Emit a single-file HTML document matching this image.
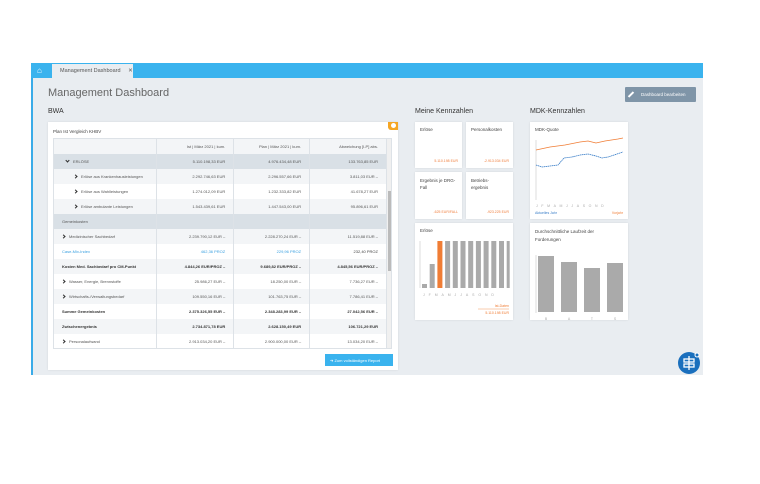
<!DOCTYPE html>
<html><head><meta charset="utf-8"><style>
*{box-sizing:border-box;margin:0;padding:0}
body{width:760px;height:484px;background:#fff;font-family:"Liberation Sans",sans-serif;position:relative;overflow:hidden;color:#444}
.a{position:absolute}
.app{left:31px;top:63px;width:672px;height:312px;background:#e9edf1;border-left:2px solid #3aabe8}
.bar{left:31px;top:63px;width:672px;height:15px;background:#3ab3ee}
.tab{left:52px;top:64px;width:81px;height:14px;background:#e9edf1;font-size:5.5px;padding:4px 0 0 8px;color:#555}
.card{background:#fff;box-shadow:0 0 2px rgba(0,0,0,.1)}
table{border-collapse:collapse;font-size:4px;color:#555}
td{height:15px;border-right:1px solid #dde2e7;text-align:right;padding-right:8px}
td:first-child{text-align:left;padding-left:8px}
tr.g td{background:#d9e0e6}
tr.l td{background:#f3f5f7}
tr.b td{font-weight:bold;color:#333}
.ch{display:inline-block;width:3px;height:3px;border-right:1px solid #333;border-bottom:1px solid #333;transform:rotate(-45deg);margin-right:4px}
.sm{font-size:4.5px;color:#444;padding:5px}
.or{color:#f08040;font-size:3.5px;position:absolute;right:4px;bottom:5px}
</style></head><body>
<div class="a app"></div>
<div class="a bar"></div>
<div class="a" style="left:37px;top:66px;width:9px;height:9px;color:#fff;font-size:8px;line-height:9px">⌂</div>
<div class="a tab">Management Dashboard <span style="margin-left:6px">✕</span></div>
<div class="a" style="left:48px;top:87px;font-size:11px;color:#666">Management Dashboard</div>
<div class="a" style="left:48px;top:108px;font-size:7px;color:#333">BWA</div>
<div class="a" style="left:415px;top:108px;font-size:7px;color:#333">Meine Kennzahlen</div>
<div class="a" style="left:530px;top:108px;font-size:7px;color:#333">MDK-Kennzahlen</div>
<div class="a" style="left:625px;top:87px;width:71px;height:15px;background:#7f95a8;color:#fff;font-size:4.5px;padding:5px 0 0 16px;border-radius:1px">Dashboard bearbeiten</div>
<div class="a" style="left:630px;top:91px;width:2px;height:7px;background:#fff;transform:rotate(45deg)"></div>

<div class="a card" style="left:48px;top:122px;width:350px;height:248px"></div>
<div class="a" style="left:388px;top:122px;width:10px;height:8px;background:#f5a623;border-radius:0 0 0 3px"></div>
<div class="a" style="left:391px;top:123px;width:5px;height:5px;background:#fff;border-radius:50%"></div>
<div class="a" style="left:53px;top:129px;font-size:4.5px;color:#444">Plan Ist Vergleich KHBV</div>
<div class="a" style="left:53px;top:138px;width:339px;height:211px;overflow:hidden;border:1px solid #dde2e7">
<table style="width:333px">
<colgroup><col style="width:103px"><col style="width:77px"><col style="width:76px"><col style="width:77px"></colgroup>
<tr class="l"><td></td><td>Ist | März 2021 | kum.</td><td>Plan | März 2021 | kum.</td><td>Abweichung [I-P] abs.</td></tr>
<tr class="g"><td style="padding-left:12px"><span class="ch" style="transform:rotate(45deg);margin-bottom:1px"></span>ERLÖSE</td><td>5.110.198,33 EUR</td><td>4.976.434,48 EUR</td><td>133.763,85 EUR</td></tr>
<tr class="l"><td style="padding-left:20px"><span class="ch"></span>Erlöse aus Krankenhausleistungen</td><td>2.292.746,63 EUR</td><td>2.296.557,66 EUR</td><td>3.811,03 EUR –</td></tr>
<tr><td style="padding-left:20px"><span class="ch"></span>Erlöse aus Wahlleistungen</td><td>1.274.012,09 EUR</td><td>1.232.333,82 EUR</td><td>41.678,27 EUR</td></tr>
<tr class="l"><td style="padding-left:20px"><span class="ch"></span>Erlöse ambulante Leistungen</td><td>1.543.439,61 EUR</td><td>1.447.543,00 EUR</td><td>95.896,61 EUR</td></tr>
<tr class="g"><td>Gemeinkosten</td><td></td><td></td><td></td></tr>
<tr class="l"><td><span class="ch"></span>Medizinischer Sachbedarf</td><td>2.239.790,12 EUR –</td><td>2.228.270,24 EUR –</td><td>11.519,88 EUR –</td></tr>
<tr><td style="color:#3aa0e0">Case-Mix-Index</td><td style="color:#3aa0e0">462,36 PROZ</td><td style="color:#3aa0e0">229,96 PROZ</td><td style="color:#444">232,40 PROZ</td></tr>
<tr class="l b"><td>Kosten Med. Sachbedarf pro CM-Punkt</td><td>4.844,26 EUR/PROZ –</td><td>9.689,82 EUR/PROZ –</td><td>4.845,56 EUR/PROZ –</td></tr>
<tr><td><span class="ch"></span>Wasser, Energie, Brennstoffe</td><td>25.986,27 EUR –</td><td>18.250,00 EUR –</td><td>7.736,27 EUR –</td></tr>
<tr class="l"><td><span class="ch"></span>Wirtschafts-/Verwaltungsbedarf</td><td>109.550,16 EUR –</td><td>101.763,75 EUR –</td><td>7.786,41 EUR –</td></tr>
<tr class="b"><td>Summe Gemeinkosten</td><td>2.375.326,55 EUR –</td><td>2.348.283,99 EUR –</td><td>27.042,56 EUR –</td></tr>
<tr class="l b"><td>Zwischenergebnis</td><td>2.734.871,78 EUR</td><td>2.628.150,49 EUR</td><td>106.721,29 EUR</td></tr>
<tr><td><span class="ch"></span>Personalaufwand</td><td>2.913.034,20 EUR –</td><td>2.900.000,00 EUR –</td><td>13.034,20 EUR –</td></tr>
</table>
<div class="a" style="left:333px;top:0;width:6px;height:211px;background:#f0f0f0"></div>
<div class="a" style="left:334px;top:52px;width:4px;height:80px;background:#bbb"></div>
</div>
<div class="a" style="left:325px;top:354px;width:68px;height:12px;background:#3ab3ee;color:#fff;font-size:4px;padding:4px 0 0 5px">➔ Zum vollständigen Report</div>

<div class="a card sm" style="left:415px;top:122px;width:47px;height:46px">Erlöse<span class="or">5.110.198 EUR</span></div>
<div class="a card sm" style="left:466px;top:122px;width:47px;height:46px">Personalkosten<span class="or">-2.913.034 EUR</span></div>
<div class="a card sm" style="left:415px;top:172px;width:47px;height:47px;line-height:7px">Ergebnis je DRG-Fall<span class="or" style="line-height:4px">-625 EUR/FALL</span></div>
<div class="a card sm" style="left:466px;top:172px;width:47px;height:47px;line-height:7px">Betriebs-<br>ergebnis<span class="or" style="line-height:4px">-923.225 EUR</span></div>
<div class="a card sm" style="left:415px;top:223px;width:98px;height:97px">Erlöse</div>
<svg class="a" style="left:415px;top:223px" width="98" height="97">
<line x1="5" y1="18" x2="5" y2="65" stroke="#ddd"/>
<rect x="7" y="61" width="5" height="4" fill="#aaa"/>
<rect x="14.7" y="41" width="5" height="24" fill="#aaa"/>
<rect x="22.4" y="18" width="5" height="47" fill="#f07d35"/>
<g fill="#aaa"><rect x="30.1" y="18" width="5" height="47"/><rect x="37.8" y="18" width="5" height="47"/><rect x="45.5" y="18" width="5" height="47"/><rect x="53.2" y="18" width="5" height="47"/><rect x="60.9" y="18" width="5" height="47"/><rect x="68.6" y="18" width="5" height="47"/><rect x="76.3" y="18" width="5" height="47"/><rect x="84" y="18" width="5" height="47"/><rect x="91.7" y="18" width="3" height="47"/></g>
<text x="8" y="73" font-size="3.5" fill="#aaa" font-family="Liberation Sans" letter-spacing="3.9">JFMAMJJASOND</text>
<text x="94" y="84" font-size="3.5" fill="#f07d35" text-anchor="end" font-family="Liberation Sans">Ist-Daten</text>
<line x1="63" y1="86" x2="94" y2="86" stroke="#f07d35" stroke-width=".4"/>
<text x="94" y="91" font-size="3.5" fill="#f07d35" text-anchor="end" font-family="Liberation Sans">5.110.198 EUR</text>
</svg>
<div class="a card sm" style="left:530px;top:122px;width:98px;height:97px">MDK-Quote</div>
<svg class="a" style="left:530px;top:122px" width="98" height="97">
<line x1="6" y1="18" x2="6" y2="78" stroke="#ddd"/>
<polyline points="6,28 20,25 35,23 50,20 58,19 66,21 75,19 88,17 93,16" fill="none" stroke="#f07d35" stroke-width="0.8"/>
<polyline points="6,43 12,45 20,44 28,43 34,36 42,35 50,33 58,32 66,34 72,36 78,35 84,33 93,30" fill="none" stroke="#3a7ec8" stroke-width="0.8" stroke-dasharray="1.5,0.5"/>
<text x="6" y="85" font-size="3.5" fill="#aaa" font-family="Liberation Sans" letter-spacing="3.6">JFMAMJJASOND</text>
<text x="5" y="92" font-size="3.5" fill="#3a7ec8" font-family="Liberation Sans">Aktuelles Jahr</text>
<text x="93" y="92" font-size="3.5" fill="#f07d35" text-anchor="end" font-family="Liberation Sans">Vorjahr</text>
</svg>
<div class="a card sm" style="left:530px;top:223px;width:98px;height:97px;line-height:8px">Durchschnittliche Laufzeit der<br>Forderungen</div>
<svg class="a" style="left:530px;top:223px" width="98" height="97">
<line x1="6" y1="32" x2="6" y2="90" stroke="#ddd"/>
<rect x="8" y="33" width="16" height="56" fill="#aaa"/>
<rect x="31" y="39" width="16" height="50" fill="#aaa"/>
<rect x="54" y="45" width="16" height="44" fill="#aaa"/>
<rect x="77" y="40" width="16" height="49" fill="#aaa"/>
<g font-size="3.5" fill="#aaa" font-family="Liberation Sans" text-anchor="middle"><text x="16" y="97">B</text><text x="39" y="97">A</text><text x="62" y="97">T</text><text x="85" y="97">S</text></g>
</svg>
<svg class="a" style="left:677px;top:351px" width="25" height="25">
<circle cx="12" cy="12" r="11" fill="#1a6fbd"/>
<circle cx="20" cy="4" r="2.5" fill="#fff"/><circle cx="20" cy="4" r="1.5" fill="#1a6fbd"/>
<g stroke="#fff" stroke-width="1.3" fill="none"><rect x="7" y="8" width="10" height="3"/><rect x="7" y="13" width="10" height="3"/><line x1="12" y1="5" x2="12" y2="19"/></g>
</svg>
</body></html>
